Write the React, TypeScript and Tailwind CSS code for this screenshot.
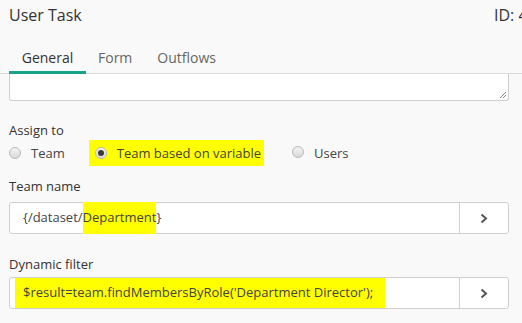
import React from 'react'

const Radio = ({ checked }: { checked?: boolean }) => (
  <span className="inline-flex w-[12px] h-[12px] rounded-full border border-[#b9b9b9] bg-gradient-to-b from-[#f4f4f4] to-[#d9d9d9] items-center justify-center">
    {checked && <span className="w-[6px] h-[6px] rounded-full bg-[#3a3a3a]" />}
  </span>
)

const Chevron = () => (
  <svg width="8" height="11" viewBox="0 0 8 11" fill="none">
    <path d="M1.5 1.5L6 5.5L1.5 9.5" stroke="#555" strokeWidth="2" />
  </svg>
)

const App = () => {
  return (
    <div className="w-[522px] h-[323px] overflow-hidden bg-[#f9f9f9] text-[#333]" style={{ fontFamily: '"Open Sans", "Noto Sans", sans-serif' }}>
      <div className="flex pl-[9px] pt-[3px] text-[16px] leading-[24px] whitespace-nowrap">
        <span className="w-[485px] shrink-0">User Task</span>
        <span className="shrink-0">ID: 4521</span>
      </div>

      <div className="mt-[21px] flex border-b border-[#dcdcdc] text-[14px] leading-[20px]">
        <div className="ml-[9px] w-[77px] text-center pb-[3px] border-b-[3px] border-[#17a387] -mb-px text-[#333]">General</div>
        <div className="ml-[11px] px-[1px] text-[#666]">Form</div>
        <div className="ml-[24px] text-[#666]">Outflows</div>
      </div>

      <div className="ml-[9px] w-[500px] h-[27px] bg-white border border-t-0 border-[#cfcfcf] rounded-b-[3px] relative">
        <svg className="absolute right-[1px] bottom-[1px]" width="8" height="8" viewBox="0 0 8 8">
          <path d="M7 1L1 7M7 4L4 7" stroke="#888" strokeWidth="1" />
        </svg>
      </div>

      <div className="px-[9px] text-[13px]">
        <div className="mt-[20px] leading-[18px]">Assign to</div>
        <div className="mt-[5px] flex items-center leading-[18px] text-[#444]">
          <Radio />
          <span className="ml-[10px]">Team</span>
          <span className="ml-[24px] flex items-center bg-[#ffff00] pl-[6px] pr-[3px] py-[4px] -my-[4px]">
            <Radio checked />
            <span className="ml-[10px]">Team based on variable</span>
          </span>
          <span className="ml-[28px]"><Radio /></span>
          <span className="ml-[10px]">Users</span>
        </div>

        <div className="mt-[15px] leading-[18px]">Team name</div>
        <div className="mt-[7px] flex w-[500px] h-[32px] bg-white border border-[#cfcfcf] rounded-[3px]">
          <div className="flex-1 flex items-center pl-[13px] text-[#444]">
            <span>{'{/dataset/'}</span>
            <span className="bg-[#ffff00] py-[6px]">Department</span>
            <span>{'}'}</span>
          </div>
          <div className="w-[49px] border-l border-[#cfcfcf] flex items-center justify-center">
            <Chevron />
          </div>
        </div>

        <div className="mt-[21px] leading-[18px]">Dynamic filter</div>
        <div className="mt-[4px] flex w-[500px] h-[32px] bg-white border border-[#cfcfcf] rounded-[3px]">
          <div className="flex-1 flex items-center pl-[5px] text-[#444]">
            <span className="bg-[#ffff00] pl-[8px] pr-[12px] py-[5px]">$result=team.findMembersByRole('Department Director');</span>
          </div>
          <div className="w-[49px] border-l border-[#cfcfcf] flex items-center justify-center">
            <Chevron />
          </div>
        </div>
      </div>
    </div>
  )
}

export default App
